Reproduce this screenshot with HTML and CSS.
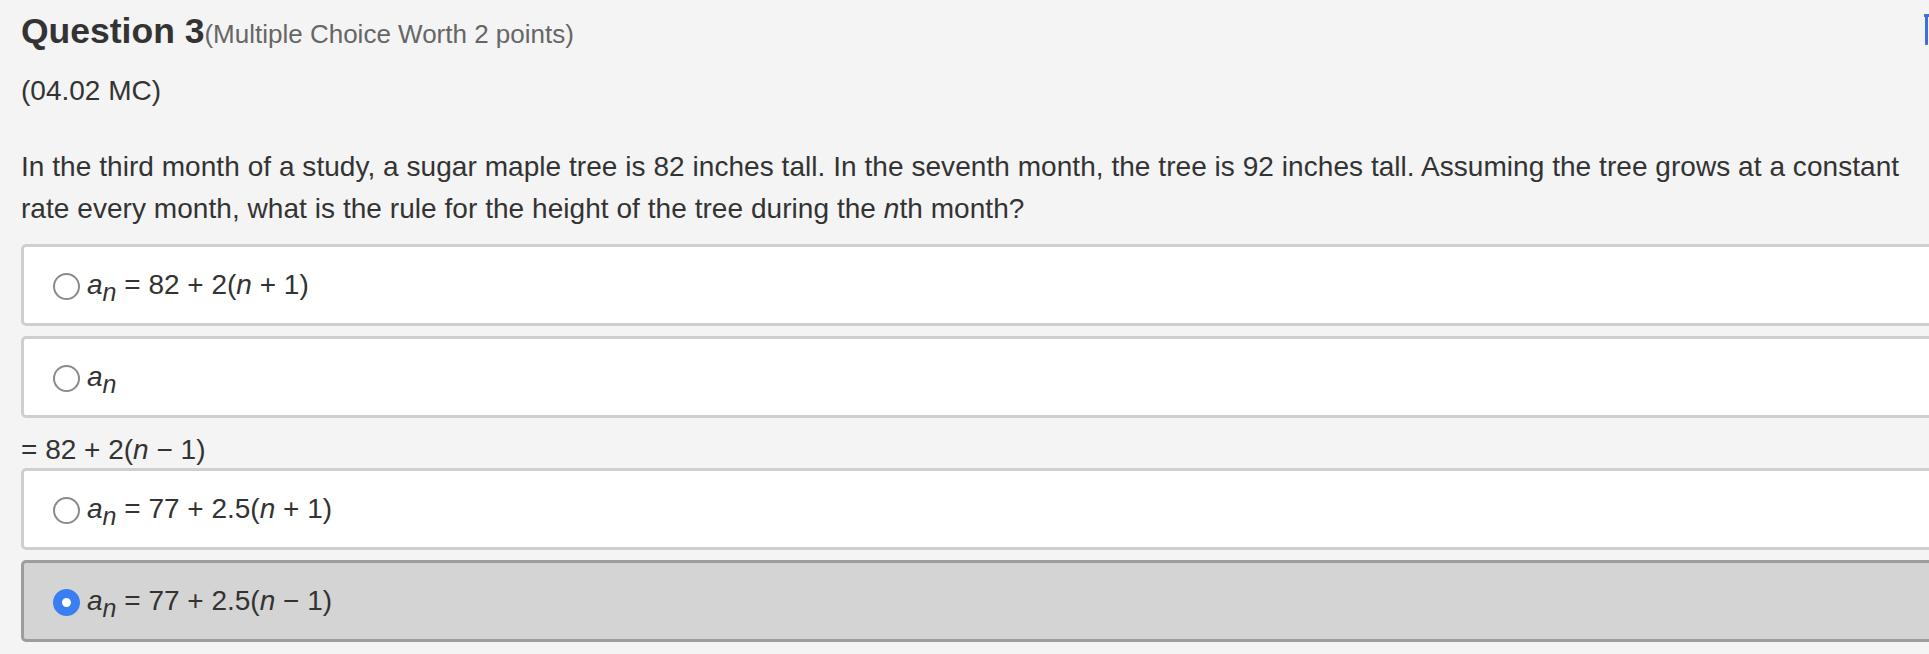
FILE: index.html
```html
<!DOCTYPE html>
<html lang="en">
<head>
<meta charset="utf-8">
<title>Question 3</title>
<link rel="stylesheet" href="styles.css">
</head>
<body>
<div class="page">
  <span class="edge-icon" aria-hidden="true"></span>
  <h1 class="title"><span class="qnum">Question 3</span><span class="worth">(Multiple Choice Worth 2 points)</span></h1>
  <p class="code">(04.02 MC)</p>
  <p class="stem">In the third month of a study, a sugar maple tree is 82 inches tall. In the seventh month, the tree is 92 inches tall. Assuming the tree grows at a constant rate every month, what is the rule for the height of the tree during the <i>n</i>th month?</p>

  <div class="options">
    <label class="option">
      <span class="radio"></span>
      <span class="expr"><i>a</i><sub><i>n</i></sub> = 82 + 2(<i>n</i> + 1)</span>
    </label>
    <label class="option">
      <span class="radio"></span>
      <span class="expr"><i>a</i><sub><i>n</i></sub></span>
    </label>
    <p class="stray">= 82 + 2(<i>n</i> &minus; 1)</p>
    <label class="option">
      <span class="radio"></span>
      <span class="expr"><i>a</i><sub><i>n</i></sub> = 77 + 2.5(<i>n</i> + 1)</span>
    </label>
    <label class="option selected">
      <span class="radio checked"></span>
      <span class="expr"><i>a</i><sub><i>n</i></sub> = 77 + 2.5(<i>n</i> &minus; 1)</span>
    </label>
  </div>
</div>
</body>
</html>
```

FILE: styles.css
```css
html, body {
  margin: 0;
  padding: 0;
  background: #f4f4f4;
  overflow: hidden;
}

body {
  font-family: "Liberation Sans", Arial, Helvetica, sans-serif;
  color: #333;
}

.page {
  position: relative;
  padding: 10px 0 0 21px;
}

.edge-icon {
  position: absolute;
  top: 14px;
  left: 1925px;
  width: 3px;
  height: 31px;
  background: #3f6fdc;
  border-radius: 1px;
}
.edge-icon::before {
  content: "";
  position: absolute;
  top: 0;
  left: -1px;
  width: 6px;
  height: 3px;
  background: #3f6fdc;
}

.title {
  margin: 0;
  line-height: 42px;
  font-weight: normal;
}
.qnum {
  font-size: 35.5px;
  font-weight: bold;
  color: #333;
}
.worth {
  font-size: 26px;
  color: #666;
}

.code {
  margin: 15px 0 0;
  font-size: 28px;
  line-height: 42px;
}

.stem {
  margin: 34px 0 0;
  font-size: 28px;
  line-height: 42px;
  letter-spacing: 0.05px;
  padding-right: 10px;
}

.options {
  margin: 14px -60px 0 0;
  display: flex;
  flex-direction: column;
}

.option {
  display: flex;
  align-items: center;
  gap: 7px;
  height: 76px;
  padding: 0 0 0 29px;
  background: #fff;
  border: 3px solid #cfcfcf;
  border-radius: 5px;
  margin-bottom: 10px;
  font-size: 28px;
}
.option.selected {
  background: #d4d4d4;
  border-color: #9d9d9d;
}

.radio {
  box-sizing: border-box;
  flex: none;
  width: 27px;
  height: 27px;
  border: 2px solid #8a8a8a;
  border-radius: 50%;
  background: #fff;
  margin-top: 2px;
}
.radio.checked {
  border: 9px solid #3a7ff2;
  background: #fff;
}

.expr {
  line-height: 42px;
  white-space: nowrap;
}
.expr sub {
  font-size: 25px;
  vertical-align: -7px;
  line-height: 0;
}

.stray {
  margin: 4px 0 0;
  font-size: 28px;
  line-height: 36px;
}
.stray + .option {
  margin-top: 0;
}
```
